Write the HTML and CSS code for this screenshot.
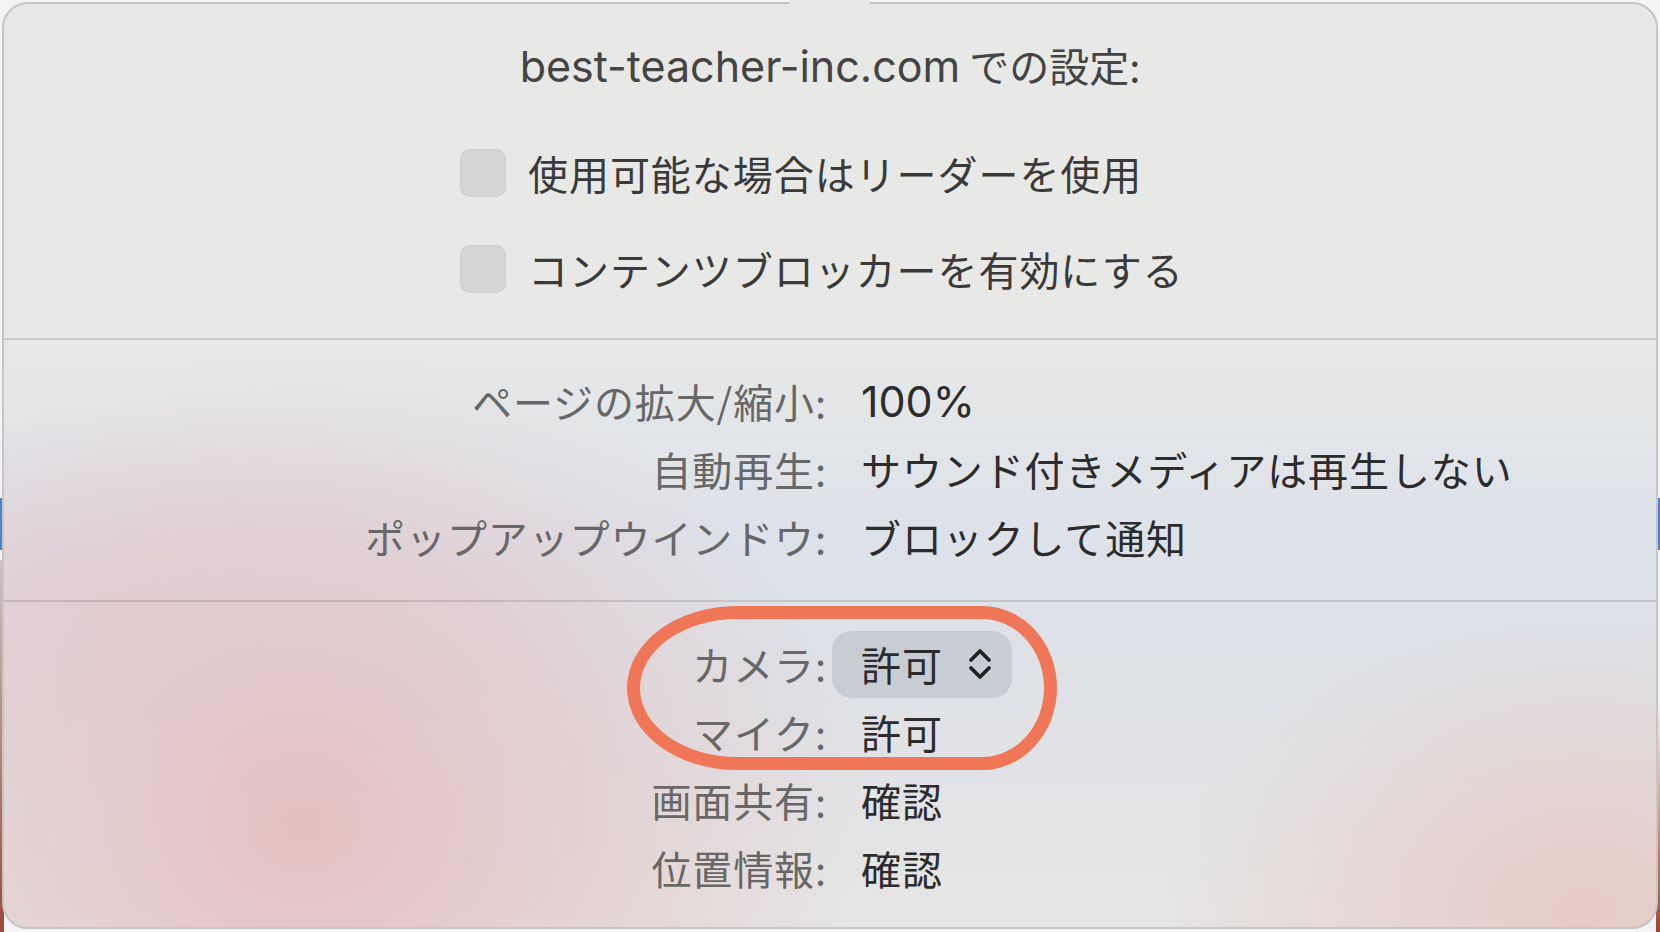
FILE: index.html
```html
<!DOCTYPE html>
<html lang="ja">
<head>
    <meta charset="UTF-8">
    <meta name="viewport" content="width=device-width, initial-scale=1.0">
    <title>best-teacher-inc.com での設定</title>
    <link rel="stylesheet" href="styles.css">
</head>
<body>
    <div class="panel">
        <span class="notch"></span>

        <h1 class="title"><span class="latin">best-teacher-inc.com</span> での設定:</h1>

        <div class="checks">
            <label class="check"><span class="box"></span>使用可能な場合はリーダーを使用</label>
            <label class="check"><span class="box"></span>コンテンツブロッカーを有効にする</label>
        </div>

        <hr class="sep">

        <dl class="settings">
            <dt>ページの拡大/縮小:</dt>
            <dd><span class="latin">100%</span></dd>
            <dt>自動再生:</dt>
            <dd>サウンド付きメディアは再生しない</dd>
            <dt>ポップアップウインドウ:</dt>
            <dd>ブロックして通知</dd>
        </dl>

        <hr class="sep">

        <dl class="settings perms">
            <div class="highlight"></div>
            <dt>カメラ:</dt>
            <dd>
                <span class="popup">許可
                    <svg width="26" height="36" viewBox="0 0 26 36">
                        <polyline points="4,14 13,5 22,14" />
                        <polyline points="4,22 13,31 22,22" />
                    </svg>
                </span>
            </dd>
            <dt>マイク:</dt>
            <dd>許可</dd>
            <dt>画面共有:</dt>
            <dd>確認</dd>
            <dt>位置情報:</dt>
            <dd>確認</dd>
        </dl>
    </div>
</body>
</html>
```

FILE: styles.css
```css
html, body {
    height: 100%;
}

/* the page behind the popover only shows at the edges */
body {
    margin: 0;
    overflow: hidden;
    font-family: "Noto Sans CJK JP", sans-serif;
    font-size: 40px;
    background:
        linear-gradient(#4d80cf, #4d80cf) left 0 top 498px / 4px 52px no-repeat,
        linear-gradient(#4d80cf, #4d80cf) right 0 top 498px / 4px 52px no-repeat,
        linear-gradient(to bottom, rgba(160, 110, 100, 0.4), #9c4a3c) left 0 top 560px / 4px 372px no-repeat,
        linear-gradient(to bottom, rgba(160, 110, 100, 0), #a04434) right 0 top 700px / 4px 232px no-repeat,
        #f4f4f4;
}

.panel {
    position: relative;
    box-sizing: border-box;
    height: 927px;
    margin: 2px 2px 3px 2px;
    padding-top: 37px;
    border: 2px solid #c6c6c6;
    border-radius: 26px;
    background:
        radial-gradient(ellipse 560px 470px at 300px 820px, rgba(228, 190, 190, 0.95), rgba(228, 190, 190, 0) 100%),
        radial-gradient(ellipse 420px 300px at 1580px 910px, rgba(230, 198, 192, 0.85), rgba(230, 198, 192, 0) 100%),
        radial-gradient(ellipse 520px 200px at 100px 600px, rgba(224, 208, 216, 0.7), rgba(224, 208, 216, 0) 100%),
        linear-gradient(to bottom, #e8e8e6 0, #e8e8e6 330px, #e2e5e8 430px, #dde1e9 540px, #dee1e6 680px, #e6e5e4 928px);
}

.notch {
    position: absolute;
    top: -4px;
    left: 785px;
    width: 81px;
    height: 6px;
    background-color: #e8e8e6;
}

.latin {
    font-family: Inter, "Noto Sans CJK JP", sans-serif;
    font-size: 43px;
    letter-spacing: 0;
}

.title {
    margin: 0;
    font-size: 40px;
    font-weight: 400;
    line-height: 48px;
    text-align: center;
    color: #444;
}

.checks {
    display: flex;
    flex-direction: column;
    gap: 48px;
    margin-top: 59px;
    padding-left: 456px;
}

.check {
    display: flex;
    align-items: center;
    gap: 22px;
    height: 48px;
    letter-spacing: 0.95px;
    color: #3a3a3a;
}

.box {
    width: 46px;
    height: 48px;
    border-radius: 10px;
    background-color: #d5d5d5;
    box-shadow: inset 0 0 0 1px rgba(0, 0, 0, 0.03);
}

.sep {
    height: 2px;
    margin: 45px 0 0;
    border: none;
    background-color: rgba(0, 0, 0, 0.12);
}

.settings {
    position: relative;
    display: grid;
    grid-template-columns: 822px 1fr;
    grid-auto-rows: 68px;
    column-gap: 35px;
    margin: 27px 0 0;
}

.settings + .sep {
    margin-top: 29px;
}

.settings dt,
.settings dd {
    display: flex;
    align-items: center;
    margin: 0;
    letter-spacing: 0.9px;
}

.settings dt {
    justify-content: flex-end;
    margin-right: -1px;
    color: #676767;
}

.settings dd {
    color: #2c2c2c;
}

.perms {
    margin-top: 28px;
}

.popup {
    display: flex;
    align-items: center;
    gap: 24px;
    box-sizing: border-box;
    width: 180px;
    height: 67px;
    margin-left: -29px;
    padding-left: 29px;
    border-radius: 20px;
    background-color: #c8cdd3;
}

.popup svg {
    fill: none;
    stroke: #222;
    stroke-width: 3.8;
    stroke-linecap: round;
    stroke-linejoin: round;
}

.highlight {
    position: absolute;
    top: -24px;
    left: 623px;
    box-sizing: border-box;
    width: 430px;
    height: 164px;
    border: 13px solid #ef7656;
    border-radius: 110px 75px 75px 110px / 82px;
    pointer-events: none;
}
```
